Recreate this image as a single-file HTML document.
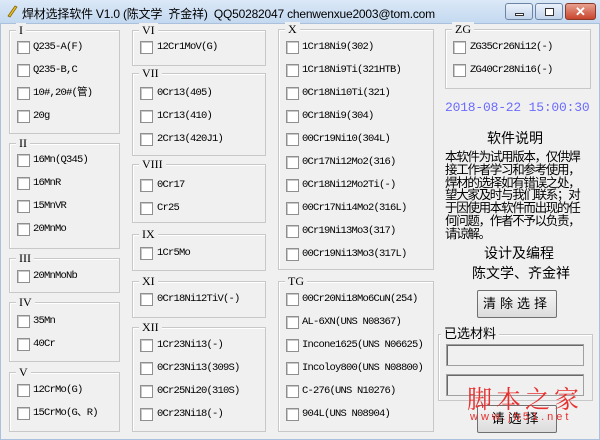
<!DOCTYPE html>
<html><head><meta charset="utf-8"><style>
*{margin:0;padding:0;box-sizing:border-box}
body{width:600px;height:440px;overflow:hidden;background:#f0f0f0;font-family:"Liberation Mono","Noto Sans CJK SC",monospace;font-size:10.5px;color:#000;position:relative}
.tb{position:absolute;left:0;top:0;width:600px;height:24px;background:linear-gradient(#dbe8f7,#c4d9f0);border-bottom:1px solid #a9c1dc}
.tt{position:absolute;left:22px;top:5px;font-family:"Liberation Sans","Noto Sans CJK SC",sans-serif;font-size:12px;color:#000;letter-spacing:-0.2px}
.g{position:absolute;border:1px solid #c8c8c8;box-shadow:1px 1px 0 #fff inset}
.gl{position:absolute;top:-8px;left:6px;background:#f0f0f0;padding:0 3px;font-family:"Liberation Serif","Noto Serif CJK SC",serif;font-size:12px;line-height:14px}
.cb{position:absolute;width:13px;height:13px;border:1px solid #8e8f8f;background:#fff;box-shadow:inset 1px 1px 0 #c8c8c8}
.t{position:absolute;white-space:nowrap;line-height:13px;letter-spacing:-0.8px}
.btn{position:absolute;border:1px solid #707070;border-radius:2px;background:linear-gradient(#f6f6f6,#dcdcdc);text-align:center;font-family:"Liberation Sans","Noto Sans CJK SC",sans-serif;font-size:13px;letter-spacing:4px;line-height:26px}
.f{position:absolute;border:1px solid #a0a0a0;background:#f0f0f0;box-shadow:inset 1px 1px 0 #696969}
.s{position:absolute;font-family:"Liberation Sans","Noto Sans CJK SC",sans-serif;font-size:13px;white-space:nowrap}
.ex{position:absolute;left:445px;top:150px;font-family:'Noto Sans CJK SC',sans-serif;font-size:12.5px;line-height:12.8px;letter-spacing:-1.3px;white-space:nowrap}
</style></head><body>
<div class="tb"></div>
<svg style="position:absolute;left:5px;top:4px" width="14" height="14"><path d="M3 12 L10 2 L12 3 L5 13 Z" fill="#e8c020" stroke="#806000" stroke-width="0.7"/></svg>
<div class="tt">焊材选择软件 V1.0 (陈文学&nbsp; 齐金祥)&nbsp; QQ50282047 chenwenxue2003@tom.com</div>
<div style="position:absolute;left:505px;top:3px;width:28px;height:17px;border:1px solid #6d85a5;border-radius:3px;background:linear-gradient(#eaf1fa,#c2d4ec)"><div style="position:absolute;left:9px;top:9px;width:9px;height:3px;border:1px solid #333;background:#fff"></div></div>
<div style="position:absolute;left:535px;top:3px;width:28px;height:17px;border:1px solid #6d85a5;border-radius:3px;background:linear-gradient(#eaf1fa,#c2d4ec)"><div style="position:absolute;left:9px;top:4px;width:9px;height:8px;border:1px solid #333;background:#fff"></div></div>
<div style="position:absolute;left:565px;top:3px;width:31px;height:17px;border:1px solid #8b3a2a;border-radius:3px;background:linear-gradient(#e8a090,#c8452c);color:#fff;font:bold 13px 'Liberation Sans',sans-serif;text-align:center;line-height:16px">✕</div>
<div style="position:absolute;left:0;top:24px;width:600px;height:416px;border:1px solid #a9c1dc;border-top:none"></div>

<div class="g" style="left:9px;top:30px;width:111px;height:104px"><span class="gl">I</span></div>
<div class="g" style="left:9px;top:143px;width:111px;height:106px"><span class="gl">II</span></div>
<div class="g" style="left:9px;top:258px;width:111px;height:35px"><span class="gl">III</span></div>
<div class="g" style="left:9px;top:302px;width:111px;height:60px"><span class="gl">IV</span></div>
<div class="g" style="left:9px;top:372px;width:111px;height:60px"><span class="gl">V</span></div>
<div class="g" style="left:132px;top:30px;width:134px;height:36px"><span class="gl">VI</span></div>
<div class="g" style="left:132px;top:73px;width:134px;height:83px"><span class="gl">VII</span></div>
<div class="g" style="left:132px;top:164px;width:134px;height:59px"><span class="gl">VIII</span></div>
<div class="g" style="left:132px;top:234px;width:134px;height:37px"><span class="gl">IX</span></div>
<div class="g" style="left:132px;top:281px;width:134px;height:37px"><span class="gl">XI</span></div>
<div class="g" style="left:132px;top:327px;width:134px;height:105px"><span class="gl">XII</span></div>
<div class="g" style="left:278px;top:29px;width:156px;height:241px"><span class="gl">X</span></div>
<div class="g" style="left:278px;top:281px;width:156px;height:151px"><span class="gl">TG</span></div>
<div class="g" style="left:445px;top:29px;width:146px;height:60px"><span class="gl">ZG</span></div>

<div class="cb" style="left:17px;top:41px"></div><div class="t" style="left:33px;top:41px">Q235-A(F)</div>
<div class="cb" style="left:17px;top:64px"></div><div class="t" style="left:33px;top:64px">Q235-B,C</div>
<div class="cb" style="left:17px;top:87px"></div><div class="t" style="left:33px;top:87px">10#,20#(管)</div>
<div class="cb" style="left:17px;top:110px"></div><div class="t" style="left:33px;top:110px">20g</div>
<div class="cb" style="left:17px;top:154px"></div><div class="t" style="left:33px;top:154px">16Mn(Q345)</div>
<div class="cb" style="left:17px;top:177px"></div><div class="t" style="left:33px;top:177px">16MnR</div>
<div class="cb" style="left:17px;top:200px"></div><div class="t" style="left:33px;top:200px">15MnVR</div>
<div class="cb" style="left:17px;top:223px"></div><div class="t" style="left:33px;top:223px">20MnMo</div>
<div class="cb" style="left:17px;top:270px"></div><div class="t" style="left:33px;top:270px">20MnMoNb</div>
<div class="cb" style="left:17px;top:315px"></div><div class="t" style="left:33px;top:315px">35Mn</div>
<div class="cb" style="left:17px;top:338px"></div><div class="t" style="left:33px;top:338px">40Cr</div>
<div class="cb" style="left:17px;top:384px"></div><div class="t" style="left:33px;top:384px">12CrMo(G)</div>
<div class="cb" style="left:17px;top:407px"></div><div class="t" style="left:33px;top:407px">15CrMo(G、R)</div>

<div class="cb" style="left:140px;top:41px"></div><div class="t" style="left:157px;top:41px">12Cr1MoV(G)</div>
<div class="cb" style="left:140px;top:87px"></div><div class="t" style="left:157px;top:87px">0Cr13(405)</div>
<div class="cb" style="left:140px;top:110px"></div><div class="t" style="left:157px;top:110px">1Cr13(410)</div>
<div class="cb" style="left:140px;top:133px"></div><div class="t" style="left:157px;top:133px">2Cr13(420J1)</div>
<div class="cb" style="left:140px;top:179px"></div><div class="t" style="left:157px;top:179px">0Cr17</div>
<div class="cb" style="left:140px;top:202px"></div><div class="t" style="left:157px;top:202px">Cr25</div>
<div class="cb" style="left:140px;top:247px"></div><div class="t" style="left:157px;top:247px">1Cr5Mo</div>
<div class="cb" style="left:140px;top:293px"></div><div class="t" style="left:157px;top:293px">0Cr18Ni12TiV(-)</div>
<div class="cb" style="left:140px;top:339px"></div><div class="t" style="left:157px;top:339px">1Cr23Ni13(-)</div>
<div class="cb" style="left:140px;top:362px"></div><div class="t" style="left:157px;top:362px">0Cr23Ni13(309S)</div>
<div class="cb" style="left:140px;top:385px"></div><div class="t" style="left:157px;top:385px">0Cr25Ni20(310S)</div>
<div class="cb" style="left:140px;top:408px"></div><div class="t" style="left:157px;top:408px">0Cr23Ni18(-)</div>

<div class="cb" style="left:286px;top:41px"></div><div class="t" style="left:302px;top:41px">1Cr18Ni9(302)</div>
<div class="cb" style="left:286px;top:64px"></div><div class="t" style="left:302px;top:64px">1Cr18Ni9Ti(321HTB)</div>
<div class="cb" style="left:286px;top:87px"></div><div class="t" style="left:302px;top:87px">0Cr18Ni10Ti(321)</div>
<div class="cb" style="left:286px;top:110px"></div><div class="t" style="left:302px;top:110px">0Cr18Ni9(304)</div>
<div class="cb" style="left:286px;top:133px"></div><div class="t" style="left:302px;top:133px">00Cr19Ni10(304L)</div>
<div class="cb" style="left:286px;top:156px"></div><div class="t" style="left:302px;top:156px">0Cr17Ni12Mo2(316)</div>
<div class="cb" style="left:286px;top:179px"></div><div class="t" style="left:302px;top:179px">0Cr18Ni12Mo2Ti(-)</div>
<div class="cb" style="left:286px;top:202px"></div><div class="t" style="left:302px;top:202px">00Cr17Ni14Mo2(316L)</div>
<div class="cb" style="left:286px;top:225px"></div><div class="t" style="left:302px;top:225px">0Cr19Ni13Mo3(317)</div>
<div class="cb" style="left:286px;top:248px"></div><div class="t" style="left:302px;top:248px">00Cr19Ni13Mo3(317L)</div>
<div class="cb" style="left:286px;top:293px"></div><div class="t" style="left:302px;top:293px">00Cr20Ni18Mo6CuN(254)</div>
<div class="cb" style="left:286px;top:316px"></div><div class="t" style="left:302px;top:316px">AL-6XN(UNS N08367)</div>
<div class="cb" style="left:286px;top:339px"></div><div class="t" style="left:302px;top:339px">Incone1625(UNS N06625)</div>
<div class="cb" style="left:286px;top:362px"></div><div class="t" style="left:302px;top:362px">Incoloy800(UNS N08800)</div>
<div class="cb" style="left:286px;top:385px"></div><div class="t" style="left:302px;top:385px">C-276(UNS N10276)</div>
<div class="cb" style="left:286px;top:408px"></div><div class="t" style="left:302px;top:408px">904L(UNS N08904)</div>

<div class="cb" style="left:453px;top:41px"></div><div class="t" style="left:470px;top:41px">ZG35Cr26Ni12(-)</div>
<div class="cb" style="left:453px;top:64px"></div><div class="t" style="left:470px;top:64px">ZG40Cr28Ni16(-)</div>

<div class="s" style="left:445px;top:100px;font-family:'Liberation Mono',monospace;font-size:13px;color:#6b6bff;letter-spacing:-0.2px">2018-08-22 15:00:30</div>
<div class="s" style="left:487px;top:128px;font-size:14px">软件说明</div>
<div class="ex">本软件为试用版本，仅供焊<br>接工作者学习和参考使用，<br>焊材的选择如有错误之处，<br>望大家及时与我们联系；对<br>于因使用本软件而出现的任<br>何问题，作者不予以负责，<br>请谅解。</div>
<div class="s" style="left:484px;top:243px;font-size:14px">设计及编程</div>
<div class="s" style="left:472px;top:263px;font-size:14px">陈文学、齐金祥</div>
<div class="btn" style="left:477px;top:290px;width:80px;height:28px">清除选择</div>
<div class="g" style="left:438px;top:334px;width:155px;height:67px"><span class="gl" style="font-family:'Liberation Sans','Noto Sans CJK SC',sans-serif;font-size:13px;left:2px">已选材料</span></div>
<div class="f" style="left:446px;top:344px;width:138px;height:22px"></div>
<div class="f" style="left:446px;top:374px;width:138px;height:22px"></div>
<div class="btn" style="left:477px;top:405px;width:80px;height:28px">请选择</div>
<div class="s" style="left:467px;top:380px;font-size:25px;color:#e83030;letter-spacing:4px;font-family:'Noto Serif CJK SC',serif">脚本之家</div>
<div class="s" style="left:470px;top:411px;font-size:11px;color:#e83030;letter-spacing:3px">www.jb51.net</div>
</body></html>
